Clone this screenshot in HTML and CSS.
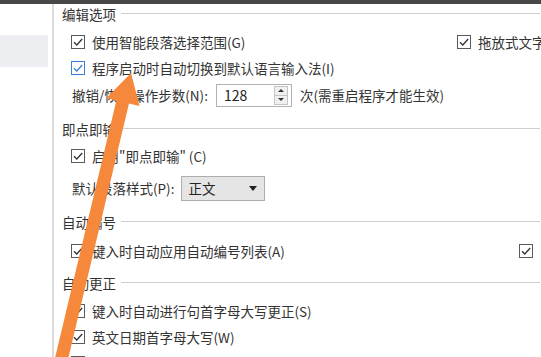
FILE: index.html
```html
<!DOCTYPE html>
<html lang="zh-CN">
<head>
<meta charset="utf-8">
<title>选项 - 编辑</title>
<link rel="stylesheet" href="styles.css">
</head>
<body>
<div class="topbar"></div>
<div class="wrap">
  <div class="side"><div class="side-item"></div></div>
  <div class="main">
    <div class="sec-head s1">编辑选项</div>
    <div class="row r-first">
      <label class="opt w1"><span class="cb"><svg viewBox="0 0 12 12"><path d="M2 6.2 L4.8 9 L10.2 3"/></svg></span>使用智能段落选择范围(G)</label>
      <label class="opt"><span class="cb"><svg viewBox="0 0 12 12"><path d="M2 6.2 L4.8 9 L10.2 3"/></svg></span>拖放式文字</label>
    </div>
    <div class="row">
      <label class="opt"><span class="cb blue"><svg viewBox="0 0 12 12"><path d="M2 6.2 L4.8 9 L10.2 3"/></svg></span>程序启动时自动切换到默认语言输入法(I)</label>
    </div>
    <div class="row spin-row">
      <span class="lbl">撤销/恢复操作步数(N):</span>
      <span class="spin"><span class="spin-val">128</span><span class="spin-btns"><span class="sb up"></span><span class="sb down"></span></span></span>
      <span class="after">次(需重启程序才能生效)</span>
    </div>

    <div class="sec-head s2">即点即输</div>
    <div class="row r-first2">
      <label class="opt"><span class="cb"><svg viewBox="0 0 12 12"><path d="M2 6.2 L4.8 9 L10.2 3"/></svg></span>启用"即点即输" (C)</label>
    </div>
    <div class="row combo-row">
      <span class="lbl">默认段落样式(P):</span>
      <span class="combo"><span>正文</span><span class="caret"></span></span>
    </div>

    <div class="sec-head s3">自动编号</div>
    <div class="row r-first3">
      <label class="opt w3"><span class="cb"><svg viewBox="0 0 12 12"><path d="M2 6.2 L4.8 9 L10.2 3"/></svg></span>键入时自动应用自动编号列表(A)</label>
      <label class="opt"><span class="cb"><svg viewBox="0 0 12 12"><path d="M2 6.2 L4.8 9 L10.2 3"/></svg></span></label>
    </div>

    <div class="sec-head s4">自动更正</div>
    <div class="row r-first4">
      <label class="opt"><span class="cb"><svg viewBox="0 0 12 12"><path d="M2 6.2 L4.8 9 L10.2 3"/></svg></span>键入时自动进行句首字母大写更正(S)</label>
    </div>
    <div class="row">
      <label class="opt"><span class="cb"><svg viewBox="0 0 12 12"><path d="M2 6.2 L4.8 9 L10.2 3"/></svg></span>英文日期首字母大写(W)</label>
    </div>
    <div class="row">
      <label class="opt"><span class="cb"><svg viewBox="0 0 12 12"><path d="M2 6.2 L4.8 9 L10.2 3"/></svg></span></label>
    </div>
  </div>
</div>
<svg class="arrow" viewBox="0 0 541 357" width="541" height="357">
  <polygon points="53.7,363.5 116.4,100.5 106.5,98 131,73 139.5,106 129,103.5 66.3,366.5"/>
</svg>
</body>
</html>
```
FILE: styles.css
```css
html, body {
  margin: 0;
  padding: 0;
}
body {
  width: 541px;
  height: 357px;
  overflow: hidden;
  position: relative;
  background: #fff;
  color: #333;
  font-family: "Noto Sans CJK SC", "Noto Sans", sans-serif;
  font-size: 13.5px;
  line-height: 20px;
}
.topbar {
  height: 4px;
  background: #474747;
}
.wrap {
  display: flex;
  height: 353px;
}
.side {
  width: 52px;
  flex-shrink: 0;
  border-right: 2px solid #dcdcdc;
}
.side-item {
  margin-top: 31px;
  width: 48px;
  height: 32px;
  background: #eceef1;
}
.main {
  flex: 1;
  min-width: 0;
  padding-left: 8px;
  padding-right: 1px;
  overflow: hidden;
}
.sec-head {
  display: flex;
  align-items: center;
  height: 20px;
  white-space: nowrap;
}
.sec-head::after {
  content: "";
  flex: 1;
  height: 1px;
  background: #cfcfcf;
  margin-left: 5px;
  margin-top: -1px;
}
.s2 { margin-top: 10px; }
.s3 { margin-top: 11px; }
.s4 { margin-top: 9px; }

.row {
  display: flex;
  align-items: center;
  height: 26px;
  padding-left: 9px;
  white-space: nowrap;
}
.r-first { margin-top: 5px; }
.r-first2 { margin-top: 4px; }
.r-first3 { margin-top: 6px; }
.r-first4 { margin-top: 5px; }

.opt {
  display: flex;
  align-items: center;
  flex-shrink: 0;
}
.w1 { width: 386px; }
.w3 { width: 448px; }

.cb {
  width: 14px;
  height: 14px;
  box-sizing: border-box;
  border: 1px solid #5a5a5a;
  background: #fff;
  margin-right: 7px;
  flex-shrink: 0;
  display: flex;
  align-items: center;
  justify-content: center;
}
.cb svg {
  width: 12px;
  height: 12px;
  fill: none;
  stroke: #333;
  stroke-width: 1.3;
}
.cb.blue {
  border-color: #3b7fd6;
}
.cb.blue svg {
  stroke: #3b7fd6;
}

.lbl {
  padding-left: 1px;
}
.spin-row {
  height: 28px;
}
.spin {
  margin-left: 8px;
  width: 76px;
  height: 23px;
  box-sizing: border-box;
  border: 1px solid #b0b0b0;
  display: flex;
  align-items: center;
  padding-left: 7px;
  padding-right: 3px;
  font-size: 14px;
  color: #222;
}
.spin-val {
  flex: 1;
}
.spin-btns {
  width: 14px;
  height: 19px;
  box-sizing: border-box;
  border: 1px solid #c4c4c4;
  background: #f0f0f0;
  display: flex;
  flex-direction: column;
}
.sb {
  flex: 1;
  display: flex;
  align-items: center;
  justify-content: center;
}
.sb.up {
  border-bottom: 1px solid #c4c4c4;
}
.sb.up::before {
  content: "";
  border-left: 3px solid transparent;
  border-right: 3px solid transparent;
  border-bottom: 3px solid #333;
}
.sb.down::before {
  content: "";
  border-left: 3px solid transparent;
  border-right: 3px solid transparent;
  border-top: 3px solid #333;
}
.after {
  margin-left: 8px;
}

.combo-row {
  margin-top: 6px;
}
.combo {
  margin-left: 7px;
  width: 84px;
  height: 25px;
  box-sizing: border-box;
  background: #e5e5e5;
  border: 1px solid #adadad;
  display: flex;
  align-items: center;
  justify-content: space-between;
  padding: 0 7px 0 6px;
  color: #222;
}
.caret {
  width: 0;
  height: 0;
  border-left: 4px solid transparent;
  border-right: 4px solid transparent;
  border-top: 5px solid #222;
}

.arrow {
  position: absolute;
  left: 0;
  top: 0;
  pointer-events: none;
}
.arrow polygon {
  fill: #f5883a;
}
```
